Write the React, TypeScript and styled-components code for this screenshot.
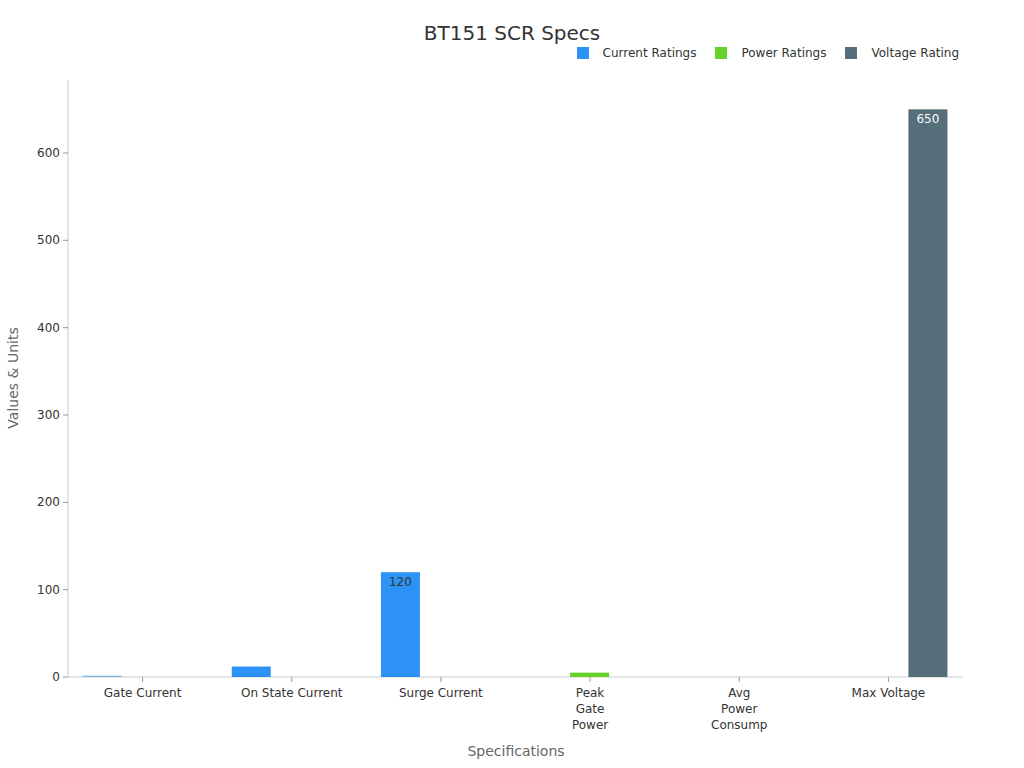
import React from 'react';
import styled, { createGlobalStyle } from 'styled-components';

const Global = createGlobalStyle`
  body { margin: 0; background: #fff; font-family: "DejaVu Sans", sans-serif; }
`;

const Frame = styled.div`
  width: 1024px;
  height: 768px;
  position: relative;
`;

const Chart = styled.svg`
  display: block;
  font-family: "DejaVu Sans", sans-serif;
`;

const Legend = styled.div`
  position: absolute;
  top: 46px;
  right: 65px;
  display: flex;
  gap: 19px;
  font-size: 12px;
  color: #333;
`;

const LegendItem = styled.div`
  display: flex;
  align-items: center;
  gap: 14px;
`;

const Swatch = styled.span<{ $c: string }>`
  width: 12px;
  height: 12px;
  background: ${p => p.$c};
`;

const X0 = 68, X1 = 963, Y0 = 677;
const K = 524 / 600;
const band = (X1 - X0) / 6;
const cats = [['Gate Current'], ['On State Current'], ['Surge Current'], ['Peak', 'Gate', 'Power'], ['Avg', 'Power', 'Consump'], ['Max Voltage']];
const bars = [
  { cat: 0, slot: 0, v: 1.5, c: '#7fb6e8', label: '' },
  { cat: 1, slot: 0, v: 12, c: '#2d92f6', label: '12' },
  { cat: 2, slot: 0, v: 120, c: '#2d92f6', label: '120' },
  { cat: 3, slot: 1, v: 5, c: '#66d22a', label: '5' },
  { cat: 4, slot: 1, v: 0.5, c: '#d6efc4', label: '' },
  { cat: 5, slot: 2, v: 650, c: '#546e7a', label: '650' },
];
const legend = [['Current Ratings', '#2d92f6'], ['Power Ratings', '#66d22a'], ['Voltage Rating', '#546e7a']];

export default function App() {
  return (
    <Frame>
      <Global />
      <Chart width={1024} height={768}>
        <text x={512} y={40} textAnchor="middle" fontSize={20} fill="#333">BT151 SCR Specs</text>
        <line x1={X0} y1={80} x2={X0} y2={Y0} stroke="#ccc" />
        <line x1={X0} y1={Y0} x2={X1} y2={Y0} stroke="#ccc" />
        {[0, 100, 200, 300, 400, 500, 600].map(v => {
          const y = Y0 - v * K;
          return (
            <g key={v}>
              <line x1={X0 - 5} x2={X0} y1={y} y2={y} stroke="#999" />
              <text x={X0 - 8} y={y + 4} textAnchor="end" fontSize={12} fill="#333">{v}</text>
            </g>
          );
        })}
        {cats.map((lines, i) => {
          const cx = X0 + band * (i + 0.5);
          return (
            <g key={i}>
              <line x1={cx} x2={cx} y1={Y0} y2={Y0 + 5} stroke="#999" />
              {lines.map((l, j) => (
                <text key={j} x={cx} y={Y0 + 20 + j * 16} textAnchor="middle" fontSize={12} fill="#333">{l}</text>
              ))}
            </g>
          );
        })}
        {bars.map((b, i) => {
          const cx = X0 + band * (b.cat + 0.5);
          const x = cx - 60 + b.slot * 40;
          const h = b.v * K;
          return (
            <g key={i}>
              <rect x={x} y={Y0 - h} width={39} height={h} fill={b.c} />
              {b.label && h > 15 && (
                <text x={x + 19.5} y={Y0 - h + 14} textAnchor="middle" fontSize={12} fill={b.c === '#546e7a' ? '#fff' : '#333'}>{b.label}</text>
              )}
            </g>
          );
        })}
        <text x={516} y={756} textAnchor="middle" fontSize={14} fill="#666">Specifications</text>
        <text transform="translate(18 378) rotate(-90)" textAnchor="middle" fontSize={14} fill="#666">Values &amp; Units</text>
      </Chart>
      <Legend>
        {legend.map(([n, c]) => (
          <LegendItem key={n}><Swatch $c={c} />{n}</LegendItem>
        ))}
      </Legend>
    </Frame>
  );
}
